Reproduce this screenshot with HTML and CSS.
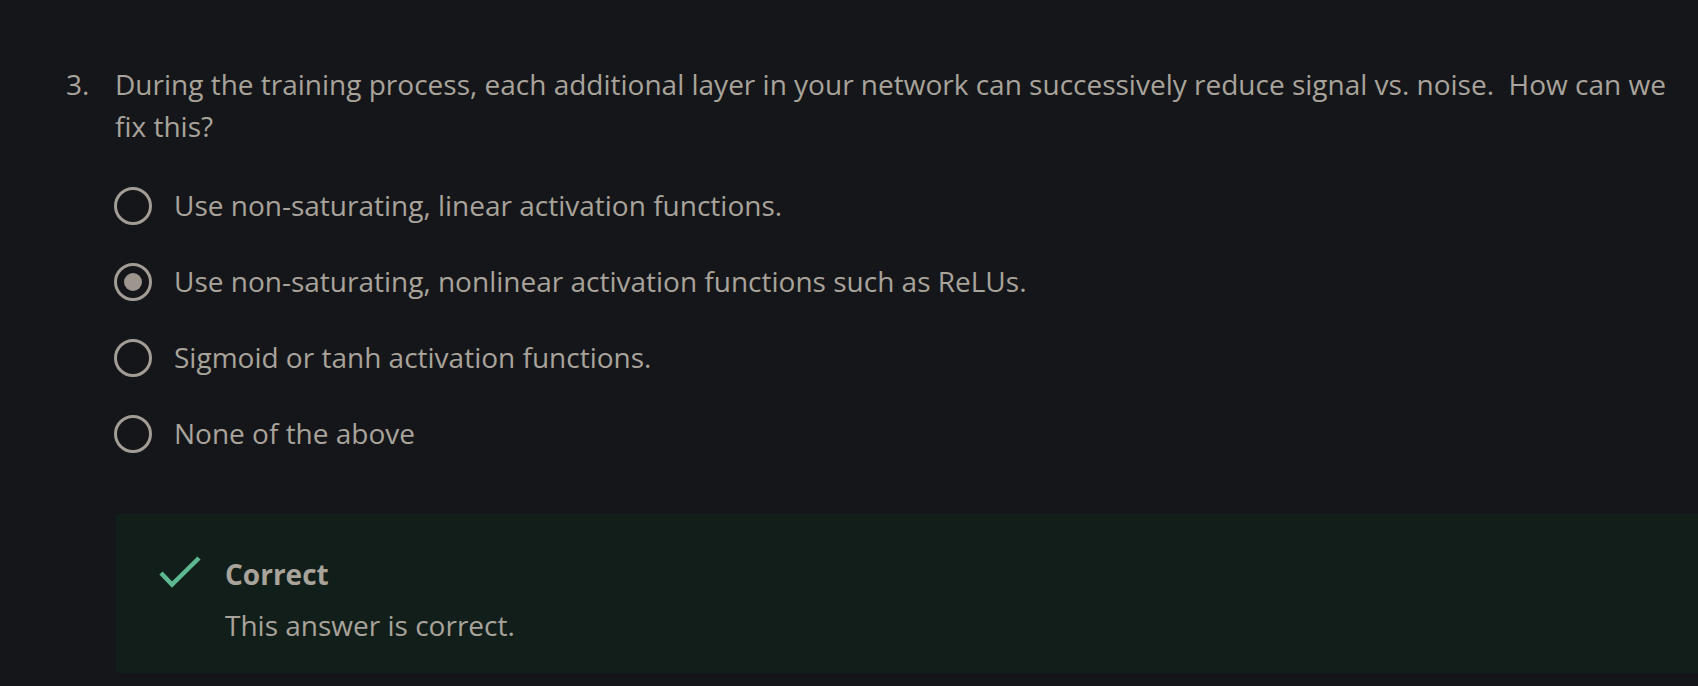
FILE: index.html
```
<!DOCTYPE html>
<html>
<head>
<meta charset="utf-8">
<link rel="stylesheet" href="styles.css">
</head>
<body>
<div class="page">
  <div class="question">
    <div class="num">3.</div>
    <div class="body">
      <div class="prompt">During the training process, each additional layer in your network can successively reduce signal vs. noise.&nbsp; How can we fix this?</div>
      <div class="options">
        <div class="option"><span class="radio"></span><span class="label">Use non-saturating, linear activation functions.</span></div>
        <div class="option"><span class="radio checked"></span><span class="label">Use non-saturating, nonlinear activation functions such as ReLUs.</span></div>
        <div class="option"><span class="radio"></span><span class="label">Sigmoid or tanh activation functions.</span></div>
        <div class="option"><span class="radio"></span><span class="label">None of the above</span></div>
      </div>
      <div class="feedback">
        <svg class="check" width="44" height="34" viewBox="0 0 44 34"><polyline points="2,17 13,28.5 40,2" fill="none" stroke="#5cb891" stroke-width="4.5"/></svg>
        <div class="fb-text">
          <div class="fb-title">Correct</div>
          <div class="fb-msg">This answer is correct.</div>
        </div>
      </div>
    </div>
  </div>
</div>
</body>
</html>
```
FILE: styles.css
```
html, body {
  margin: 0;
  padding: 0;
  background: #151619;
}
body {
  font-family: "Open Sans", "Liberation Sans", sans-serif;
  font-size: 28px;
  line-height: 42px;
  color: #a8a39b;
}
.page {
  padding: 63px 0 0 66px;
}
.question {
  display: flex;
}
.num {
  width: 49px;
  flex: none;
}
.body {
  flex: 1;
  min-width: 0;
}
.options {
  margin-top: 37px;
  display: flex;
  flex-direction: column;
  gap: 34px;
}
.option {
  display: flex;
  align-items: center;
}
.radio {
  width: 38px;
  height: 38px;
  box-sizing: border-box;
  border: 3px solid #a19c95;
  border-radius: 50%;
  flex: none;
  display: flex;
  align-items: center;
  justify-content: center;
  margin: 2px 22px 0 -1px;
}
.radio.checked::after {
  content: "";
  width: 18px;
  height: 18px;
  border-radius: 50%;
  background: #9c968f;
}
.feedback {
  margin-top: 60px;
  margin-left: 1px;
  background: #121e1a;
  display: flex;
  align-items: flex-start;
  padding: 39px 0 26px 43px;
  height: 159px;
  box-sizing: border-box;
}
.check {
  flex: none;
  margin: 3px 22px 0 0;
}
.fb-title {
  font-weight: 700;
}
.fb-msg {
  margin-top: 9px;
}
```
